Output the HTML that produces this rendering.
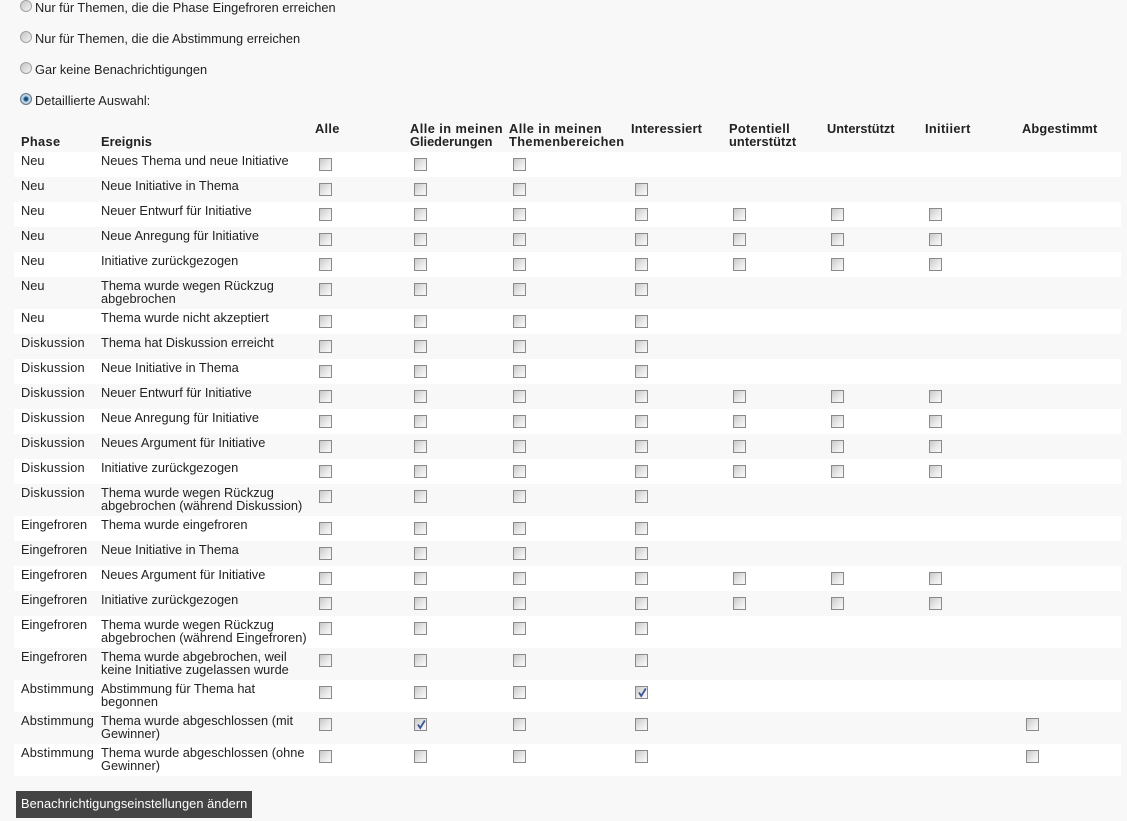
<!DOCTYPE html>
<html lang="de"><head><meta charset="utf-8"><title>Benachrichtigungen</title>
<style>
html,body{margin:0;padding:0;width:1127px;height:821px;overflow:hidden;background:#f8f8f8}
body{position:relative;font:12.8px/13px "Liberation Sans",Arial,sans-serif;color:#222}
.r{position:absolute;left:20px;width:10px;height:10px;border:1px solid #a2a2a2;border-radius:50%;background:linear-gradient(135deg,#c4c4c4 0,#dcdcdc 50%,#f4f4f4 100%)}
.r.on{background:radial-gradient(circle,#0c3a66 0,#2b6ca3 32%,#c9d8e6 42%,#a8b4c0 100%);border-color:#64788a}
.l{position:absolute;left:35px;white-space:nowrap;line-height:14px}
.h{position:absolute;font-weight:bold;white-space:nowrap;line-height:13px;top:122px}
table{position:absolute;left:14px;top:152px;width:1107px;border-collapse:collapse;table-layout:fixed}
td{padding:0;vertical-align:top;overflow:visible;white-space:nowrap}
tr{height:25px}tr.t{height:32px}
tr:nth-child(odd) td{background:#fff}
td.a{padding:2px 0 0 7px}
td.s{letter-spacing:.2px}
td.b{padding:2px 0 0 4px}
i{display:block;box-sizing:border-box;width:13px;height:13px;margin:6px 0 0 8px;border:1px solid #8a8a8a;background:linear-gradient(135deg,#c8c8c8 0,#e8e8e8 55%,#fafafa 100%);position:relative}
i svg{position:absolute;left:1px;top:0}
.btn{position:absolute;left:16px;top:791px;width:236px;height:27px;background:#444;color:#fff;line-height:26px;padding-left:5px;box-sizing:border-box;white-space:nowrap;letter-spacing:.06px}
</style></head><body>
<span class="r" style="top:0"></span><span class="l" style="top:1px">Nur für Themen, die die Phase Eingefroren erreichen</span>
<span class="r" style="top:31px"></span><span class="l" style="top:32px">Nur für Themen, die die Abstimmung erreichen</span>
<span class="r" style="top:62px"></span><span class="l" style="top:63px">Gar keine Benachrichtigungen</span>
<span class="r on" style="top:93px"></span><span class="l" style="top:94px">Detaillierte Auswahl:</span>
<div class="h" style="left:21px;top:135px;letter-spacing:.35px">Phase</div>
<div class="h" style="left:101px;top:135px;letter-spacing:.05px">Ereignis</div>
<div class="h" style="left:315px;letter-spacing:.3px">Alle</div>
<div class="h" style="left:410px"><span style="letter-spacing:.45px">Alle in meinen</span><br>Gliederungen</div>
<div class="h" style="left:509px"><span style="letter-spacing:.45px">Alle in meinen</span><br><span style="letter-spacing:.4px">Themenbereichen</span></div>
<div class="h" style="left:631px;letter-spacing:.17px">Interessiert</div>
<div class="h" style="left:729px"><span style="letter-spacing:.34px">Potentiell</span><br><span style="letter-spacing:.1px">unterstützt</span></div>
<div class="h" style="left:827px">Unterstützt</div>
<div class="h" style="left:925px;letter-spacing:.34px">Initiiert</div>
<div class="h" style="left:1022px;letter-spacing:.15px">Abgestimmt</div>
<table>
<colgroup><col style="width:83px"><col style="width:214px"><col style="width:95px"><col style="width:99px"><col style="width:122px"><col style="width:98px"><col style="width:98px"><col style="width:98px"><col style="width:97px"><col style="width:103px"></colgroup>
<tr><td class="a">Neu</td><td class="b">Neues Thema und neue Initiative</td><td><i></i></td><td><i></i></td><td><i></i></td><td></td><td></td><td></td><td></td><td></td></tr>
<tr><td class="a">Neu</td><td class="b">Neue Initiative in Thema</td><td><i></i></td><td><i></i></td><td><i></i></td><td><i></i></td><td></td><td></td><td></td><td></td></tr>
<tr><td class="a">Neu</td><td class="b">Neuer Entwurf für Initiative</td><td><i></i></td><td><i></i></td><td><i></i></td><td><i></i></td><td><i></i></td><td><i></i></td><td><i></i></td><td></td></tr>
<tr><td class="a">Neu</td><td class="b">Neue Anregung für Initiative</td><td><i></i></td><td><i></i></td><td><i></i></td><td><i></i></td><td><i></i></td><td><i></i></td><td><i></i></td><td></td></tr>
<tr><td class="a">Neu</td><td class="b">Initiative zurückgezogen</td><td><i></i></td><td><i></i></td><td><i></i></td><td><i></i></td><td><i></i></td><td><i></i></td><td><i></i></td><td></td></tr>
<tr class="t"><td class="a">Neu</td><td class="b">Thema wurde wegen Rückzug<br>abgebrochen</td><td><i></i></td><td><i></i></td><td><i></i></td><td><i></i></td><td></td><td></td><td></td><td></td></tr>
<tr><td class="a">Neu</td><td class="b">Thema wurde nicht akzeptiert</td><td><i></i></td><td><i></i></td><td><i></i></td><td><i></i></td><td></td><td></td><td></td><td></td></tr>
<tr><td class="a s">Diskussion</td><td class="b">Thema hat Diskussion erreicht</td><td><i></i></td><td><i></i></td><td><i></i></td><td><i></i></td><td></td><td></td><td></td><td></td></tr>
<tr><td class="a s">Diskussion</td><td class="b">Neue Initiative in Thema</td><td><i></i></td><td><i></i></td><td><i></i></td><td><i></i></td><td></td><td></td><td></td><td></td></tr>
<tr><td class="a s">Diskussion</td><td class="b">Neuer Entwurf für Initiative</td><td><i></i></td><td><i></i></td><td><i></i></td><td><i></i></td><td><i></i></td><td><i></i></td><td><i></i></td><td></td></tr>
<tr><td class="a s">Diskussion</td><td class="b">Neue Anregung für Initiative</td><td><i></i></td><td><i></i></td><td><i></i></td><td><i></i></td><td><i></i></td><td><i></i></td><td><i></i></td><td></td></tr>
<tr><td class="a s">Diskussion</td><td class="b">Neues Argument für Initiative</td><td><i></i></td><td><i></i></td><td><i></i></td><td><i></i></td><td><i></i></td><td><i></i></td><td><i></i></td><td></td></tr>
<tr><td class="a s">Diskussion</td><td class="b">Initiative zurückgezogen</td><td><i></i></td><td><i></i></td><td><i></i></td><td><i></i></td><td><i></i></td><td><i></i></td><td><i></i></td><td></td></tr>
<tr class="t"><td class="a s">Diskussion</td><td class="b">Thema wurde wegen Rückzug<br>abgebrochen (während Diskussion)</td><td><i></i></td><td><i></i></td><td><i></i></td><td><i></i></td><td></td><td></td><td></td><td></td></tr>
<tr><td class="a">Eingefroren</td><td class="b">Thema wurde eingefroren</td><td><i></i></td><td><i></i></td><td><i></i></td><td><i></i></td><td></td><td></td><td></td><td></td></tr>
<tr><td class="a">Eingefroren</td><td class="b">Neue Initiative in Thema</td><td><i></i></td><td><i></i></td><td><i></i></td><td><i></i></td><td></td><td></td><td></td><td></td></tr>
<tr><td class="a">Eingefroren</td><td class="b">Neues Argument für Initiative</td><td><i></i></td><td><i></i></td><td><i></i></td><td><i></i></td><td><i></i></td><td><i></i></td><td><i></i></td><td></td></tr>
<tr><td class="a">Eingefroren</td><td class="b">Initiative zurückgezogen</td><td><i></i></td><td><i></i></td><td><i></i></td><td><i></i></td><td><i></i></td><td><i></i></td><td><i></i></td><td></td></tr>
<tr class="t"><td class="a">Eingefroren</td><td class="b">Thema wurde wegen Rückzug<br>abgebrochen (während Eingefroren)</td><td><i></i></td><td><i></i></td><td><i></i></td><td><i></i></td><td></td><td></td><td></td><td></td></tr>
<tr class="t"><td class="a">Eingefroren</td><td class="b">Thema wurde abgebrochen, weil<br>keine Initiative zugelassen wurde</td><td><i></i></td><td><i></i></td><td><i></i></td><td><i></i></td><td></td><td></td><td></td><td></td></tr>
<tr class="t"><td class="a s">Abstimmung</td><td class="b">Abstimmung für Thema hat<br>begonnen</td><td><i></i></td><td><i></i></td><td><i></i></td><td><i><svg width="11" height="11" viewBox="0 0 11 11"><path d="M2 5.5 L4.2 9 L8.8 1.5" fill="none" stroke="#3c5797" stroke-width="1.8"/></svg></i></td><td></td><td></td><td></td><td></td></tr>
<tr class="t"><td class="a s">Abstimmung</td><td class="b">Thema wurde abgeschlossen (mit<br>Gewinner)</td><td><i></i></td><td><i><svg width="11" height="11" viewBox="0 0 11 11"><path d="M2 5.5 L4.2 9 L8.8 1.5" fill="none" stroke="#3c5797" stroke-width="1.8"/></svg></i></td><td><i></i></td><td><i></i></td><td></td><td></td><td></td><td><i></i></td></tr>
<tr class="t"><td class="a s">Abstimmung</td><td class="b">Thema wurde abgeschlossen (ohne<br>Gewinner)</td><td><i></i></td><td><i></i></td><td><i></i></td><td><i></i></td><td></td><td></td><td></td><td><i></i></td></tr>
</table>
<div class="btn">Benachrichtigungseinstellungen ändern</div>
</body></html>
